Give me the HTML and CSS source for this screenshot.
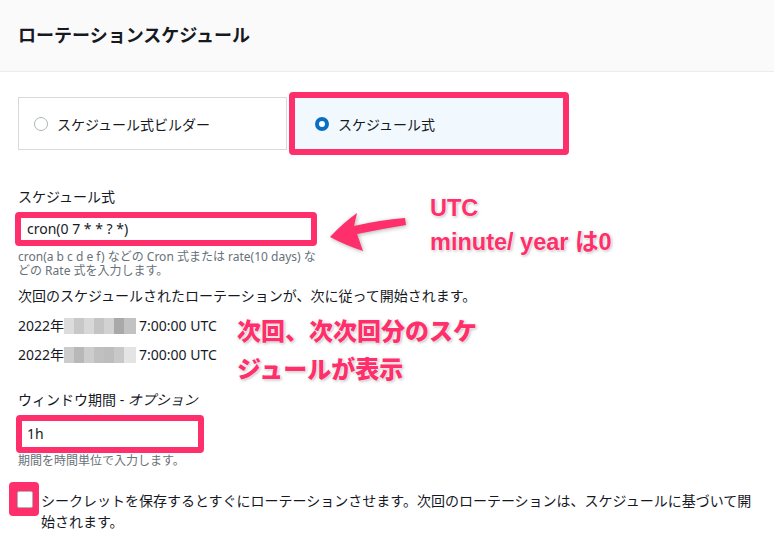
FILE: index.html
```html
<!DOCTYPE html>
<html lang="ja">
<head>
    <meta charset="UTF-8">
    <meta name="viewport" content="width=device-width, initial-scale=1.0">
    <title>ローテーションスケジュール</title>
    <link rel="stylesheet" href="styles.css">
</head>
<body>
    <div class="panel">
        <header class="panel-header">
            <h2>ローテーションスケジュール</h2>
        </header>

        <div class="panel-body">
            <div class="tiles">
                <label class="tile">
                    <span class="radio"></span>
                    スケジュール式ビルダー
                </label>
                <label class="tile tile-selected mark">
                    <span class="radio radio-on"></span>
                    スケジュール式
                </label>
            </div>

            <div class="field field-cron">
                <div class="field-label">スケジュール式</div>
                <div class="input mark input-cron">cron(0 7 * * ? *)</div>
                <div class="hint">cron(a b c d e f) などの Cron 式または rate(10 days) などの Rate 式を入力します。</div>
            </div>

            <p class="next-title">次回のスケジュールされたローテーションが、次に従って開始されます。</p>
            <ul class="dates">
                <li>2022年<span class="blur"></span>7:00:00 UTC</li>
                <li>2022年<span class="blur blur-b"></span>7:00:00 UTC</li>
            </ul>

            <div class="field field-window">
                <div class="field-label">ウィンドウ期間 - <em>オプション</em></div>
                <div class="input mark input-window">1h</div>
                <div class="hint">期間を時間単位で入力します。</div>
            </div>

            <label class="check">
                <span class="check-mark mark"><span class="check-box"></span></span>
                <span class="check-text">シークレットを保存するとすぐにローテーションさせます。次回のローテーションは、スケジュールに基づいて開始されます。</span>
            </label>
        </div>

        <!-- annotations -->
        <div class="note note-utc">UTC<br>minute/ year は0</div>
        <svg class="arrow" width="90" height="50" viewBox="0 0 90 50">
            <path d="M5 32 Q18 18 32 8 L29 21 Q55 15 80 13 L81 20 Q56 24 32 29 L38 46 Q20 40 5 32 Z" fill="#fe2f6b"/>
        </svg>
        <div class="note note-next">次回、次次回分のスケ<br>ジュールが表示</div>
    </div>
</body>
</html>
```

FILE: styles.css
```css
body {
    margin: 0;
    background: #ffffff;
    color: #16191f;
    font-family: "Noto Sans", "Noto Sans CJK JP", sans-serif;
    font-size: 14px;
}

.panel {
    position: relative;
    width: 774px;
    height: 555px;
    overflow: hidden;
}

.panel-header {
    height: 71px;
    background: #fafafa;
    border-bottom: 1px solid #eaeded;
    padding: 0 18px;
}

.panel-header h2 {
    margin: 0;
    font-size: 18px;
    font-weight: 700;
    line-height: 71px;
}

.panel-body {
    padding: 0 18px;
}

.mark {
    border: 6px solid #fe2f6b;
    border-radius: 4px;
}

/* tiles */
.tiles {
    display: flex;
    align-items: center;
    gap: 2px;
    margin-top: 20px;
    height: 63px;
}

.tile {
    display: flex;
    align-items: center;
    gap: 9px;
    box-sizing: border-box;
    width: 269px;
    height: 53px;
    padding: 0 15px;
    border: 1px solid #d5dbdb;
    background: #ffffff;
}

.tile-selected {
    width: 280px;
    height: 63px;
    padding: 0 14px 0 20px;
    border: 6px solid #fe2f6b;
    background: #f1f8fe;
}

.radio {
    box-sizing: border-box;
    width: 14px;
    height: 14px;
    border: 1.5px solid #aab7b8;
    border-radius: 50%;
    background: #ffffff;
}

.radio-on {
    border: 4px solid #0a6fc2;
}

/* fields */
.field-cron {
    margin-top: 32px;
}

.field-label {
    line-height: 20px;
}

.field-label em {
    font-style: italic;
}

.input {
    box-sizing: border-box;
    margin-top: 5px;
    padding-left: 6px;
    background: #ffffff;
}

.input-cron {
    width: 302px;
    height: 34px;
    margin-left: -3px;
    line-height: 22px;
}

.input-window {
    width: 188px;
    height: 38px;
    margin-left: -2px;
    padding-left: 5px;
    line-height: 26px;
}

.hint {
    color: #687078;
    font-size: 12px;
    line-height: 14px;
}

.field-cron .hint {
    width: 302px;
    margin-top: 4px;
}

.field-window .hint {
    margin-top: 1px;
}

.next-title {
    margin: 8px 0 0;
    line-height: 20px;
}

.dates {
    list-style: none;
    margin: 10px 0 0;
    padding: 0;
}

.dates li {
    display: flex;
    align-items: center;
    line-height: 20px;
    margin-bottom: 9px;
}

.blur {
    width: 72px;
    height: 16px;
    margin-right: 3px;
    background: linear-gradient(90deg,
        #dcdcdc 0 10px, #c8c8c8 10px 20px, #d8d8d8 20px 30px, #c4c4c4 30px 40px,
        #d2d2d2 40px 50px, #a9a9a9 50px 60px, #c2c2c2 60px 72px);
}

.blur-b {
    background: linear-gradient(90deg,
        #cccccc 0 10px, #b8b8b8 10px 20px, #cdcdcd 20px 30px, #c0c0c0 30px 40px,
        #bdbdbd 40px 50px, #c8c8c8 50px 60px, #e4e4e4 60px 72px);
}

.field-window {
    margin-top: 25px;
}

/* checkbox */
.check {
    display: flex;
    align-items: flex-start;
    gap: 2px;
    margin: 14px 0 0 -9px;
}

.check-mark {
    flex: none;
    box-sizing: border-box;
    width: 30px;
    height: 34px;
    border: none;
    background: #fe2f6b;
    padding: 9px 6px 0 8px;
}

.check-box {
    display: block;
    box-sizing: border-box;
    width: 16px;
    height: 17px;
    border: 1px solid #aab7b8;
    border-radius: 2px;
    background: #ffffff;
}

.check-text {
    padding-top: 8px;
    line-height: 21px;
}

/* annotations over the screenshot */
.note {
    position: absolute;
    color: #fe2f6b;
    font-weight: 700;
    text-shadow: 0 0 2px #ffffff, 0 0 2px #ffffff, 1px 1px 3px rgba(0, 0, 0, 0.35);
}

.note-utc {
    left: 430px;
    top: 191px;
    font-family: "Liberation Sans", "Noto Sans CJK JP", sans-serif;
    font-size: 23.5px;
    line-height: 34px;
}

.note-next {
    left: 237px;
    top: 311px;
    font-family: "Noto Sans CJK JP", sans-serif;
    font-size: 24px;
    font-weight: 900;
    line-height: 38px;
}

.arrow {
    position: absolute;
    left: 325px;
    top: 205px;
    filter: drop-shadow(1px 1px 2px rgba(0, 0, 0, 0.3));
}
```
